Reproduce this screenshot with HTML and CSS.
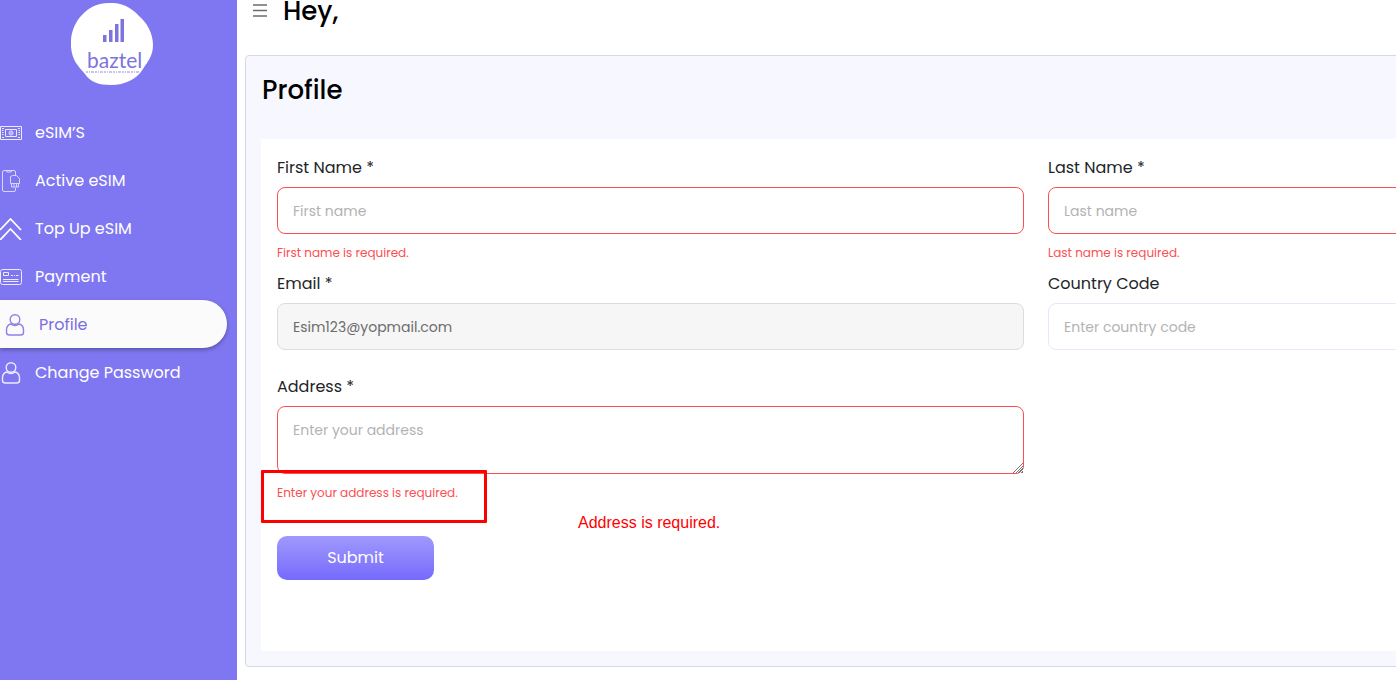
FILE: index.html
```html
<!DOCTYPE html>
<html lang="en">
<head>
<meta charset="utf-8">
<meta name="viewport" content="width=device-width, initial-scale=1">
<title>Baztel - Profile</title>
<link rel="stylesheet" href="styles.css">
</head>
<body>
<div class="app">
  <aside class="sidebar">
    <div class="logo">
      <svg class="logo-shape" viewBox="0 0 82 82" role="img" aria-label="baztel">
        <path d="M38 0C51-1 62 6 68 13C76 20 82 30 82 42C82 53 77 58 72 66C66 76 54 82 40 82C28 82 19 79 14 71C7 63 1 57 0 44C-1 30 4 19 11 12C18 4 27 0 38 0Z" fill="#fff"/>
        <path d="M32 32h3.500v7H32zM38 27h3.500v12H38zM44 21h3.500v18H44zM49.500 16H53v23h-3.500z" fill="#7d74dc"/>
        <text class="logo-name" x="16" y="65">baztel</text>
        <path d="M15 69h54" stroke="#b9b4ea" stroke-width="1.400" stroke-dasharray="2 1 1 1 3 1"/>
      </svg>
    </div>
    <nav class="menu">
      <a class="menu-link" href="#">
        <svg class="icon" viewBox="0 0 22 22" fill="none" stroke="currentColor" aria-hidden="true"><path d="M.5 4.500h21v13H.5zM5.500 7.500h11v7h-11zM2 6.500h2M2 8.500h1.500M2 10.500h1.500M2 12.500h1.500M2 15.500h2M18 6.500h2M18.500 8.500H20M18.500 10.500H20M18.500 12.500H20M18 15.500h2"/><circle cx="11" cy="11" r="2"/><path d="M11 10v2"/></svg>
        <span>eSIM’S</span>
      </a>
      <a class="menu-link" href="#">
        <svg class="icon icon-light" viewBox="0 0 22 22" fill="none" stroke="currentColor" aria-hidden="true"><path d="M15.500 5V2q0-1.500-1.500-1.500H4Q2.500.500 2.500 2v18q0 1.500 1.500 1.500h10q1.500 0 1.500-1.500v-2M6 .500l1 1.500h4l1-1.500M10.500 13.500v-7l2-1h4l3 3v5zM11.500 13.500v3.500h7v-3.500M14 14v3M16.500 14v3"/></svg>
        <span>Active eSIM</span>
      </a>
      <a class="menu-link" href="#">
        <svg class="icon icon-bold" viewBox="0 0 22 22" fill="none" stroke="currentColor" stroke-width="1.800" aria-hidden="true"><path d="M0 12L10.500 1 21 12M0 22l10.500-11L21 22"/></svg>
        <span>Top Up eSIM</span>
      </a>
      <a class="menu-link" href="#">
        <svg class="icon" viewBox="0 0 22 22" fill="none" stroke="currentColor" aria-hidden="true"><rect x=".5" y="3.500" width="21" height="15" rx="2"/><path d="M3.500 6.500h5v3h-5zM11 9.500h2M14 9.500h1M16 9.500h2.500M3 13.500h15.500M3 15.500h15.500"/></svg>
        <span>Payment</span>
      </a>
      <a class="menu-link menu-link-active" href="#" aria-current="page">
        <svg class="icon" viewBox="0 0 22 22" fill="none" stroke="currentColor" stroke-width="1.400" aria-hidden="true"><circle cx="11" cy="5.500" r="4.800"/><path d="M6.500 10c-3 1-4 3-4 6v2.500q0 2.500 3 2.500h11q3 0 3-2.500V16c0-3-1-5-4-6-3 2-6 2-9 0z"/></svg>
        <span>Profile</span>
      </a>
      <a class="menu-link" href="#">
        <svg class="icon" viewBox="0 0 22 22" fill="none" stroke="currentColor" stroke-width="1.400" aria-hidden="true"><circle cx="11" cy="5.500" r="4.800"/><path d="M6.500 10c-3 1-4 3-4 6v2.500q0 2.500 3 2.500h11q3 0 3-2.500V16c0-3-1-5-4-6-3 2-6 2-9 0z"/></svg>
        <span>Change Password</span>
      </a>
    </nav>
  </aside>

  <div class="viewport">
    <main class="content">
      <header class="topbar">
        <button class="toggle" type="button" aria-label="Toggle menu">
          <svg class="toggle-icon" viewBox="0 0 14 14" aria-hidden="true"><path d="M0 1h14M0 6.500h14M0 12h14" stroke="#6c6c6c" stroke-width="1.600"/></svg>
        </button>
        <h1 class="title">Hey,</h1>
      </header>
      <section class="card">
        <h2 class="title">Profile</h2>
        <form class="panel" novalidate>
          <div class="fields">
            <div class="field">
              <label class="label" for="first">First Name *</label>
              <input class="control invalid" id="first" type="text" placeholder="First name">
              <p class="error">First name is required.</p>
            </div>
            <div class="field">
              <label class="label" for="last">Last Name *</label>
              <input class="control invalid" id="last" type="text" placeholder="Last name">
              <p class="error">Last name is required.</p>
            </div>
            <div class="field">
              <label class="label" for="email">Email *</label>
              <input class="control" id="email" type="email" value="Esim123@yopmail.com" disabled>
            </div>
            <div class="field">
              <label class="label" for="country">Country Code</label>
              <input class="control" id="country" type="text" placeholder="Enter country code">
            </div>
            <div class="field field-address">
              <label class="label" for="address">Address *</label>
              <textarea class="control area invalid" id="address" placeholder="Enter your address"></textarea>
              <p class="error">Enter your address is required.</p>
            </div>
          </div>
          <button class="submit" type="submit">Submit</button>
          <div class="marker"></div>
          <p class="note">Address is required.</p>
        </form>
      </section>
    </main>
  </div>
</div>
</body>
</html>
```

FILE: styles.css
```css
* {
  box-sizing: border-box;
}

body {
  margin: 0;
  background: #fff;
  color: #212529;
  font-family: Poppins, Inter, sans-serif;
  font-size: 16px;
  line-height: 24px;
}

h1,
h2,
p {
  margin: 0;
}

.app {
  display: flex;
  min-height: 100vh;
}

.sidebar {
  flex: none;
  width: 237px;
  background: #7f77f1;
}

.logo {
  height: 108px;
  padding: 3px 0 0 71px;
}

.logo-shape {
  display: block;
  width: 82px;
  height: 82px;
}

.logo-name {
  fill: #7d74dc;
  font-family: Lato, sans-serif;
  font-size: 21px;
}

.menu {
  display: flex;
  flex-direction: column;
}

.menu-link {
  display: flex;
  align-items: center;
  gap: 13px;
  height: 48px;
  padding-top: 2px;
  color: #fff;
  text-decoration: none;
}

.menu-link-active {
  margin-right: 10px;
  padding-left: 4px;
  border-radius: 0 24px 24px 0;
  background: #fbfbfc;
  box-shadow: 0 2px 4px rgba(0, 0, 0, 0.3);
  color: #7b6fe0;
}

.icon {
  flex: none;
  width: 22px;
  height: 22px;
  opacity: 0.85;
}

.icon-light {
  opacity: 0.7;
}

.icon-bold {
  opacity: 1;
}

.viewport {
  flex: 1;
  min-width: 0;
  overflow: hidden;
}

.content {
  width: calc(100% + 439px);
  padding: 0 8px 13px;
}

.topbar {
  display: flex;
  align-items: flex-start;
  gap: 16px;
  height: 55px;
  padding-left: 8px;
}

.toggle {
  padding: 4px 0 0;
  border: 0;
  background: none;
}

.toggle-icon {
  display: block;
  width: 14px;
  height: 14px;
}

.title {
  color: #000;
  font-size: 26px;
  font-weight: 500;
  line-height: 22px;
}

.card {
  padding: 15px;
  border: 1px solid #d8d8e0;
  border-radius: 4px;
  background: #f7f7ff;
}

.card .title {
  margin-bottom: 30px;
  padding-left: 1px;
  line-height: 38px;
}

.panel {
  position: relative;
  min-height: 512px;
  padding: 17px 16px;
  background: #fff;
}

.fields {
  display: grid;
  grid-template-columns: 1fr 1fr;
  column-gap: 24px;
  row-gap: 10px;
}

.field {
  display: flex;
  flex-direction: column;
}

.field-address {
  margin-top: 15px;
}

.label {
  margin-bottom: 7px;
}

.control {
  width: 100%;
  height: 47px;
  padding: 2px 15px 0;
  border: 1px solid #e9e7fd;
  border-radius: 8px;
  background: #fff;
  color: #212529;
  font-family: inherit;
  font-size: 14px;
}

.control::placeholder {
  color: #b3b3b3;
  opacity: 1;
}

.control:disabled {
  border-color: #dcdcdc;
  background: #f6f6f6;
  color: #6c6c6c;
}

.control.invalid {
  border-color: #fd4f52;
}

.area {
  display: block;
  height: 68px;
  padding: 13px 15px 12px;
  line-height: 21px;
  resize: vertical;
}

.area::-webkit-resizer {
  background:
    linear-gradient(135deg, #fff 50%, transparent 50%) right bottom / 11px 11px no-repeat,
    repeating-linear-gradient(135deg, #777 0 1px, #fff 1px 2px) right bottom / 11px 11px no-repeat;
}

.error {
  margin-top: 10px;
  color: #fd4f52;
  font-size: 12px;
  line-height: 18px;
}

.submit {
  display: block;
  width: 157px;
  height: 44px;
  margin-top: 34px;
  padding: 0 0 2px;
  border: 0;
  border-radius: 10px;
  background: linear-gradient(#a099fd, #766afc);
  color: #fff;
  font-family: inherit;
  font-size: 16px;
}

.marker {
  position: absolute;
  top: 331px;
  left: 0;
  width: 226px;
  height: 53px;
  border: 3px solid #f00;
  border-radius: 1px;
}

.note {
  position: absolute;
  top: 372px;
  left: 317px;
  color: #f00;
  font-family: "Liberation Sans", Arial, sans-serif;
}
```
